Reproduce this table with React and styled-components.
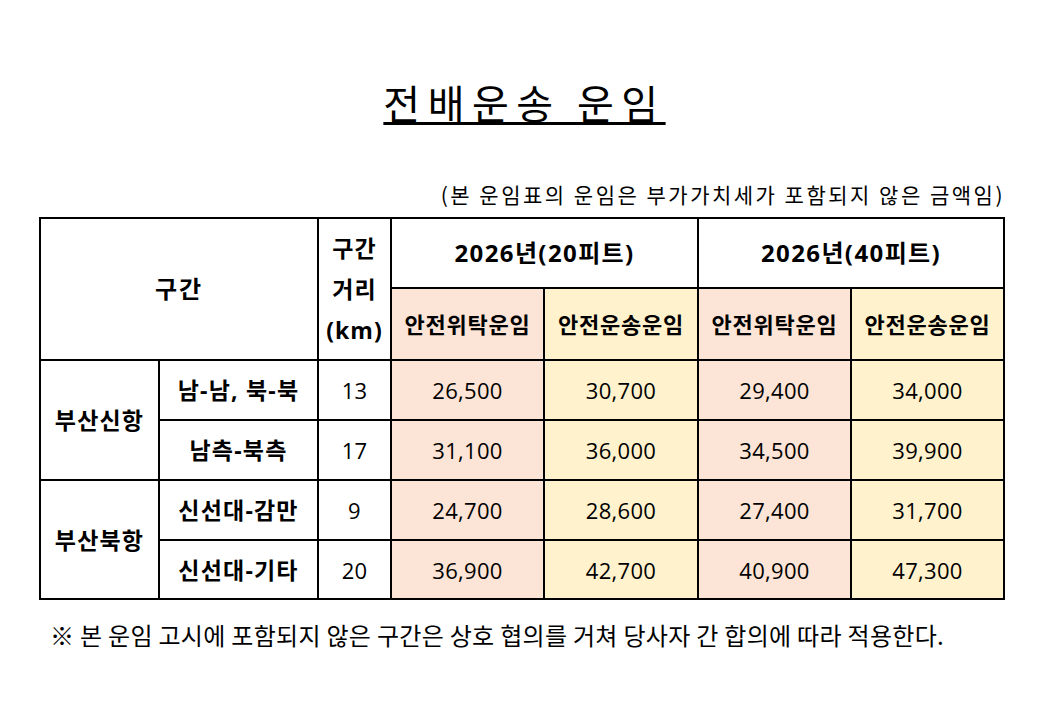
import React from 'react'
import styled, { createGlobalStyle } from 'styled-components'

const GlobalStyle = createGlobalStyle`
  body {
    margin: 0;
    background: #ffffff;
    font-family: "Open Sans", "Noto Sans CJK KR", sans-serif;
    color: #000;
  }
`

const Page = styled.div`
  width: 1062px;
  height: 728px;
  box-sizing: border-box;
  padding: 79px 59px 0 39px;
`

const TitleRow = styled.div`
  text-align: center;
  height: 46px;
  padding-left: 7px;
`

const Title = styled.h1`
  display: inline-block;
  margin: 0;
  font-family: "Noto Sans CJK KR", sans-serif;
  font-size: 40px;
  font-weight: 400;
  line-height: 46px;
  letter-spacing: 7.5px;
  text-decoration: underline;
  text-decoration-thickness: 3px;
  text-underline-offset: 3px;
`

const Note = styled.p`
  margin: 54px -2px 8px 0;
  text-align: right;
  font-family: "Noto Sans CJK KR", sans-serif;
  font-size: 21px;
  line-height: 30px;
  letter-spacing: 2.5px;
`

const Table = styled.table`
  border-collapse: collapse;
  table-layout: fixed;
  width: 966px;
`

const Row = styled.tr`
  height: ${p => p.$h}px;
`

const tones = {
  plain: '#ffffff',
  rose: '#FCE4D6',
  cream: '#FFF2CC',
}

const Cell = styled.td`
  border: 2px solid #000;
  padding: 0;
  text-align: center;
  vertical-align: middle;
  background: ${p => tones[p.$tone || 'plain']};
  font-size: ${p => p.$size || 22}px;
  font-weight: ${p => (p.$bold ? 700 : 400)};
  line-height: ${p => p.$lh || 30}px;
  letter-spacing: ${p => (p.$ls !== undefined ? p.$ls : 0.3)}px;
  white-space: nowrap;
`

const Footnote = styled.p`
  margin: 20px 0 0 11px;
  font-family: "Noto Sans CJK KR", sans-serif;
  font-size: 24px;
  line-height: 30px;
  letter-spacing: 0.3px;
`

const widths = [119, 159, 73, 153, 154, 153, 153]

const groups = [
  {
    port: '부산신항',
    rows: [
      { route: '남-남, 북-북', km: 13, fares: ['26,500', '30,700', '29,400', '34,000'] },
      { route: '남측-북측', km: 17, fares: ['31,100', '36,000', '34,500', '39,900'] },
    ],
  },
  {
    port: '부산북항',
    rows: [
      { route: '신선대-감만', km: 9, fares: ['24,700', '28,600', '27,400', '31,700'] },
      { route: '신선대-기타', km: 20, fares: ['36,900', '42,700', '40,900', '47,300'] },
    ],
  },
]

const fareTones = ['rose', 'cream', 'rose', 'cream']
const rowHeights = [60, 60, 60, 59]

const App = () => {
  let n = 0
  return (
    <>
      <GlobalStyle />
      <Page>
        <TitleRow>
          <Title>전배운송 운임</Title>
        </TitleRow>
        <Note>(본 운임표의 운임은 부가가치세가 포함되지 않은 금액임)</Note>
        <Table>
          <colgroup>
            {widths.map((w, i) => (
              <col key={i} style={{ width: w }} />
            ))}
          </colgroup>
          <thead>
            <Row $h={70}>
              <Cell as="th" colSpan={2} rowSpan={2} $bold $size={24} $ls={2}>구간</Cell>
              <Cell as="th" rowSpan={2} $bold $size={23} $ls={1} $lh={41}>
                구간<br />거리<br />(km)
              </Cell>
              <Cell as="th" colSpan={2} $bold $size={24} $ls={1.4}>2026년(20피트)</Cell>
              <Cell as="th" colSpan={2} $bold $size={24} $ls={1.4}>2026년(40피트)</Cell>
            </Row>
            <Row $h={72}>
              <Cell as="th" $bold $size={22} $ls={0.8} $tone="rose">안전위탁운임</Cell>
              <Cell as="th" $bold $size={22} $ls={0.8} $tone="cream">안전운송운임</Cell>
              <Cell as="th" $bold $size={22} $ls={0.8} $tone="rose">안전위탁운임</Cell>
              <Cell as="th" $bold $size={22} $ls={0.8} $tone="cream">안전운송운임</Cell>
            </Row>
          </thead>
          <tbody>
            {groups.map(g =>
              g.rows.map((r, i) => (
                <Row key={g.port + i} $h={rowHeights[n++]}>
                  {i === 0 && (
                    <Cell rowSpan={g.rows.length} $bold $size={23} $ls={1.2}>{g.port}</Cell>
                  )}
                  <Cell $bold $size={23} $ls={1.2}>{r.route}</Cell>
                  <Cell>{r.km}</Cell>
                  {r.fares.map((f, j) => (
                    <Cell key={j} $tone={fareTones[j]}>{f}</Cell>
                  ))}
                </Row>
              ))
            )}
          </tbody>
        </Table>
        <Footnote>※ 본 운임 고시에 포함되지 않은 구간은 상호 협의를 거쳐 당사자 간 합의에 따라 적용한다.</Footnote>
      </Page>
    </>
  )
}

export default App
